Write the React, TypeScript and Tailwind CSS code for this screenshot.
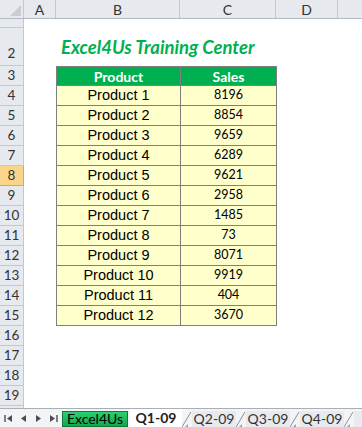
import React from "react";

const products = [
  { name: "Product 1", sales: 8196 },
  { name: "Product 2", sales: 8854 },
  { name: "Product 3", sales: 9659 },
  { name: "Product 4", sales: 6289 },
  { name: "Product 5", sales: 9621 },
  { name: "Product 6", sales: 2958 },
  { name: "Product 7", sales: 1485 },
  { name: "Product 8", sales: 73 },
  { name: "Product 9", sales: 8071 },
  { name: "Product 10", sales: 9919 },
  { name: "Product 11", sales: 404 },
  { name: "Product 12", sales: 3670 },
];

const calibri = "font-['Lato','Open_Sans',sans-serif]";

function RowHead({ n, active, h = "h-[20px]" }: { n: number; active?: boolean; h?: string }) {
  return (
    <div
      className={`w-[24px] shrink-0 ${h} flex items-center justify-center border-r border-b text-[13.5px] text-[#333] ${
        active ? "bg-[#f8d58a] border-[#e2a83c]" : "bg-[#e6e9ed] border-[#c3c8cf]"
      }`}
    >
      {n}
    </div>
  );
}

function ColHead({ label, w }: { label: string; w: string }) {
  return (
    <div className={`${w} shrink-0 h-full flex items-center justify-center border-r border-[#c3c8cf] text-[14px] text-[#333]`}>
      {label}
    </div>
  );
}

function Tab({ label }: { label: string }) {
  return (
    <div className="flex items-end h-full shrink-0">
      <svg width="10" height="16" viewBox="0 0 10 16" className="shrink-0">
        <path d="M0 16 L9 1" stroke="#8a9099" strokeWidth="1" fill="none" />
        <path d="M3 16 L6 13 L6 16 Z" fill="#9aa0a8" />
      </svg>
      <div className="h-[16px] w-[44px] flex items-center justify-center bg-[#e8eaee] text-[14px] text-[#333] leading-none whitespace-nowrap">
        {label}
      </div>
    </div>
  );
}

export default function App() {
  return (
    <div className={`w-[362px] h-[427px] overflow-hidden bg-white flex flex-col ${calibri}`}>
      {/* column headers */}
      <div className="h-[19px] shrink-0 flex bg-[#e6e9ed] border-b border-[#b4bac2]">
        <div className="w-[24px] shrink-0 h-full border-r border-[#c3c8cf] flex items-end justify-end p-[2px]">
          <svg width="11" height="11" viewBox="0 0 11 11">
            <path d="M11 0 L11 11 L0 11 Z" fill="#c9cdd3" />
          </svg>
        </div>
        <ColHead label="A" w="w-[32px]" />
        <ColHead label="B" w="w-[124px]" />
        <ColHead label="C" w="w-[96px]" />
        <ColHead label="D" w="w-[62px]" />
        <div className="flex-1 h-full" />
      </div>

      <div className="flex-1 overflow-hidden flex flex-col">
        {/* row 1 */}
        <div className="flex shrink-0">
          <div className="w-[24px] h-[9px] overflow-hidden border-r border-b border-[#c3c8cf] bg-[#e6e9ed] flex justify-center">
            <span className="block text-[13px] leading-[13px] text-[#333] -mt-[11px]">1</span>
          </div>
        </div>

        {/* row 2 - title */}
        <div className="flex shrink-0">
          <RowHead n={2} h="h-[38px] items-end pb-[2px]" />
          <div className="pl-[37px] pt-[6px] text-[18.5px] font-bold italic text-[#00b050] whitespace-nowrap">
            Excel4Us Training Center
          </div>
        </div>

        {/* row 3 - table header */}
        <div className="flex shrink-0">
          <RowHead n={3} />
          <div className="w-[32px] shrink-0" />
          <div className="w-[124px] h-[20px] shrink-0 bg-[#00b050] border-l border-t border-b border-[#7f7f7f] flex items-center justify-center text-white font-bold text-[14px]">
            Product
          </div>
          <div className="w-[97px] h-[20px] shrink-0 bg-[#00b050] border-l border-r border-t border-b border-[#7f7f7f] flex items-center justify-center text-white font-bold text-[14px]">
            Sales
          </div>
        </div>

        {products.map((p, i) => (
          <div key={p.name} className="flex shrink-0">
            <RowHead n={i + 4} active={i + 4 === 8} />
            <div className="w-[32px] shrink-0" />
            <div className="w-[124px] h-[20px] shrink-0 bg-[#ffffcc] border-l border-b border-[#7f7f7f] flex items-center justify-center text-[14.5px] text-black font-['Liberation_Sans',Arial,sans-serif]">
              {p.name}
            </div>
            <div className="w-[97px] h-[20px] shrink-0 bg-[#ffffcc] border-l border-r border-b border-[#7f7f7f] flex items-center justify-center text-[12.5px] text-black">
              {p.sales}
            </div>
          </div>
        ))}

        {[16, 17, 18, 19, 20].map((n) => (
          <div key={n} className="flex shrink-0">
            <RowHead n={n} />
          </div>
        ))}
      </div>

      {/* sheet tabs */}
      <div className="h-[19px] shrink-0 flex items-end bg-[#f3f4f6] border-t border-[#a9afb8] overflow-hidden">
        <div className="w-[60px] h-full shrink-0 flex items-center gap-[6px] pl-[4px] text-[#4a4f57]">
          <svg width="9" height="9" viewBox="0 0 9 9"><path d="M1 1 V8" stroke="currentColor" strokeWidth="1.4" /><path d="M8 1 L3 4.5 L8 8 Z" fill="currentColor" /></svg>
          <svg width="9" height="9" viewBox="0 0 9 9"><path d="M7 1 L2 4.5 L7 8 Z" fill="currentColor" /></svg>
          <svg width="9" height="9" viewBox="0 0 9 9"><path d="M2 1 L7 4.5 L2 8 Z" fill="currentColor" /></svg>
          <svg width="9" height="9" viewBox="0 0 9 9"><path d="M1 1 L6 4.5 L1 8 Z" fill="currentColor" /><path d="M8 1 V8" stroke="currentColor" strokeWidth="1.4" /></svg>
        </div>
        <div className="h-[16px] w-[66px] ml-[2px] shrink-0 bg-gradient-to-b from-[#2ccf6e] to-[#10a84e] border border-[#0d7a3a] flex items-center justify-center text-[14px] text-black leading-none">
          Excel4Us
        </div>
        <div className="h-[18px] w-[52px] ml-[2px] shrink-0 bg-white flex items-center justify-center text-[14px] font-bold text-[#222] leading-none">
          Q1-09
        </div>
        <Tab label="Q2-09" />
        <Tab label="Q3-09" />
        <Tab label="Q4-09" />
        <Tab label="T" />
      </div>
    </div>
  );
}
